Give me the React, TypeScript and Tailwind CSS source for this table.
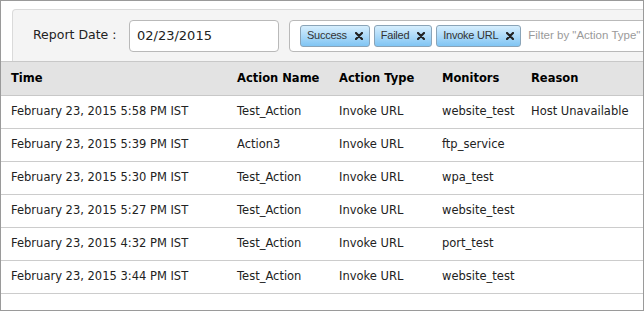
import React from 'react';

const rows = [
  { time: 'February 23, 2015 5:58 PM IST', action: 'Test_Action', type: 'Invoke URL', monitor: 'website_test', reason: 'Host Unavailable' },
  { time: 'February 23, 2015 5:39 PM IST', action: 'Action3', type: 'Invoke URL', monitor: 'ftp_service', reason: '' },
  { time: 'February 23, 2015 5:30 PM IST', action: 'Test_Action', type: 'Invoke URL', monitor: 'wpa_test', reason: '' },
  { time: 'February 23, 2015 5:27 PM IST', action: 'Test_Action', type: 'Invoke URL', monitor: 'website_test', reason: '' },
  { time: 'February 23, 2015 4:32 PM IST', action: 'Test_Action', type: 'Invoke URL', monitor: 'port_test', reason: '' },
  { time: 'February 23, 2015 3:44 PM IST', action: 'Test_Action', type: 'Invoke URL', monitor: 'website_test', reason: '' },
];

const tags = ['Success', 'Failed', 'Invoke URL'];

function Tag({ label }: { label: string }) {
  return (
    <span className="flex items-center h-[22px] pl-[6px] pr-[6px] gap-[8px] rounded-[3px] border border-[#8aa4b8] bg-gradient-to-b from-[#d6eefd] to-[#80c5f4] text-[11px] tracking-[-0.25px] text-[#333] font-['Liberation_Sans',Arial,sans-serif]">
      {label}
      <svg width="8" height="8" viewBox="0 0 8 8" className="shrink-0">
        <path d="M1 1 L7 7 M7 1 L1 7" stroke="#222" strokeWidth="2.2" strokeLinecap="round" />
      </svg>
    </span>
  );
}

export default function App() {
  return (
    <div className="w-[644px] h-[311px] overflow-hidden border border-[#9a9a9a] bg-white font-['DejaVu_Sans',Verdana,sans-serif]">
      {/* Filter bar */}
      <div className="pt-[8px] pl-[11px]">
        <div className="w-[700px] h-[52px] flex items-center rounded-tl-[4px] border border-[#dadada] border-b-0 bg-[#f4f4f4]">
          <span className="ml-[20px] w-[96px] text-[12.5px] text-[#222]">Report Date :</span>
          <div className="w-[150px] h-[32px] flex items-center pl-[7px] rounded-[4px] border border-[#b9b9b9] bg-white text-[13px] text-[#222]">
            02/23/2015
          </div>
          <div className="ml-[10px] flex-1 h-[32px] flex items-center gap-[4px] pl-[10px] rounded-[4px] border border-[#b9b9b9] bg-white">
            {tags.map(t => <Tag key={t} label={t} />)}
            <span className="ml-[3px] text-[11.5px] text-[#9a9a9a] font-['Liberation_Sans',Arial,sans-serif]">Filter by "Action Type"</span>
          </div>
        </div>
      </div>

      {/* Table */}
      <table className="w-full border-collapse text-[11.5px] text-[#222]">
        <thead>
          <tr className="h-[34px] bg-[#e3e3e3] border-t border-b border-[#c8c8c8]">
            <th className="text-left font-bold text-black pl-[10px] w-[236px]">Time</th>
            <th className="text-left font-bold text-black w-[102px]">Action Name</th>
            <th className="text-left font-bold text-black w-[103px]">Action Type</th>
            <th className="text-left font-bold text-black w-[89px]">Monitors</th>
            <th className="text-left font-bold text-black">Reason</th>
          </tr>
        </thead>
        <tbody>
          {rows.map((r, i) => (
            <tr key={i} className="h-[33px] border-b border-[#cccccc]">
              <td className="pl-[10px]">{r.time}</td>
              <td>{r.action}</td>
              <td>{r.type}</td>
              <td>{r.monitor}</td>
              <td>{r.reason}</td>
            </tr>
          ))}
        </tbody>
      </table>
    </div>
  );
}
